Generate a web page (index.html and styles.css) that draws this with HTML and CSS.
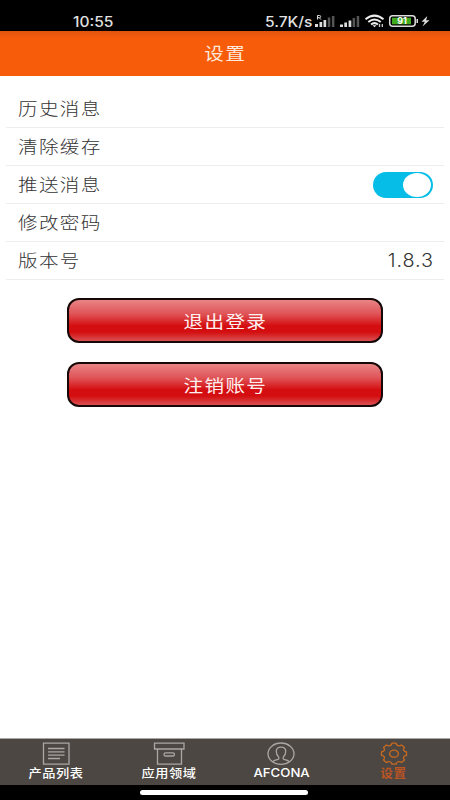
FILE: index.html
```html
<!DOCTYPE html>
<html lang="zh-CN">
<head>
<meta charset="utf-8">
<title>设置</title>
<link rel="stylesheet" href="styles.css">
</head>
<body>
<div class="phone">
  <div class="status">
    <span class="clock">10:55</span>
    <span class="speed">5.7K/s</span>
    <svg class="indicators" width="118" height="20" viewBox="0 0 118 20">
      <g fill="#ddd">
        <path d="M1 14h3v3h-3zM5.500 12h2.700v5h-2.700zM9.500 10h2.700v7h-2.700z"/>
        <path d="M26 14.500h3v2.500h-3zM30.300 12.500h2.700v4.500h-2.700zM34.600 10.500h2.700v6.500h-2.700z"/>
      </g>
      <g fill="#555"><path d="M13.800 7.500h2.500v9.500h-2.500zM17.900 6h2.500v11h-2.500zM38.600 8h2.500v9h-2.500zM42.700 6h2.500v11h-2.500z"/></g>
      <path d="M3.500 9.500V5.500h2q1.200 0 1.200 1.100t-1.200 1.100h-2M5.300 7.700L6.900 9.500" fill="none" stroke="#ddd" stroke-width="1"/>
      <g fill="none" stroke="#eee" stroke-width="2">
        <path d="M51.500 9.200Q60.500 2 69.500 9.200M54.300 12Q60.500 7 66.700 12M57 14.500Q60.500 11.800 64 14.500"/>
      </g>
      <path d="M58.500 15.200h4L60.500 17.300z" fill="#eee"/>
      <path d="M65.500 17v-3M68.300 14V17" stroke="#ccc" stroke-width="1.300"/>
      <rect x="75.700" y="5.700" width="25.500" height="10.600" rx="3" fill="#000" stroke="#ddd" stroke-width="1.500"/>
      <rect x="78" y="7.700" width="19" height="6.600" fill="#43a91e"/>
      <path d="M102.500 9h1.500v4h-1.500z" fill="#ddd"/>
      <text x="88" y="14" text-anchor="middle" class="charge">91</text>
      <path d="M113.300 6L107.500 11.800h3.300L108.500 16.500l7-6.200h-3.400z" fill="#ddd"/>
    </svg>
  </div>
  <header class="title"><span class="stretch">设置</span></header>
  <main class="content">
    <ul class="list">
      <li class="row"><span class="label">历史消息</span></li>
      <li class="row"><span class="label">清除缓存</span></li>
      <li class="row"><span class="label">推送消息</span><span class="switch"><span class="knob"></span></span></li>
      <li class="row"><span class="label">修改密码</span></li>
      <li class="row"><span class="label">版本号</span><span class="version">1.8.3</span></li>
    </ul>
    <div class="actions">
      <button class="action"><span class="stretch">退出登录</span></button>
      <button class="action"><span class="stretch">注销账号</span></button>
    </div>
  </main>
  <nav class="tabs">
    <div class="tab">
      <svg width="28" height="24" viewBox="0 0 28 24" fill="none" stroke="#aaa7a4" stroke-width="1.300"><path d="M1.500 1.200h25.500v21h-25.500z"/><path d="M6 6.500h16.500M6 9.800h16.500M6 13.100h16.500M6 16.500h12"/></svg>
      <span class="tab-text">产品列表</span>
    </div>
    <div class="tab">
      <svg width="32" height="24" viewBox="0 0 32 24" fill="none" stroke="#aaa7a4" stroke-width="1.300"><path d="M1.500 1.200h29.500v5.800h-29.500zM4.500 7v15.200h24V7"/><rect x="11" y="10.800" width="10.500" height="3.200" rx="1.600"/></svg>
      <span class="tab-text">应用领域</span>
    </div>
    <div class="tab">
      <svg width="28" height="24" viewBox="0 0 28 24" fill="none" stroke="#aaa7a4" stroke-width="1.300"><ellipse cx="14" cy="11.700" rx="13" ry="10.700"/><path d="M5.500 19.900Q7 18.200 11 17.400Q12.500 16.900 11.500 14.700Q9.300 12.700 9.300 9.200Q9.300 5.200 14 5.200T18.700 9.200Q18.700 12.700 16.500 14.700Q15.500 16.900 17 17.400Q21 18.200 22.500 19.900"/></svg>
      <span class="tab-text latin">AFCONA</span>
    </div>
    <div class="tab active">
      <svg width="28" height="24" viewBox="-14 -11.700 28 24" fill="none" stroke="#c86a20" stroke-width="1.300" stroke-linejoin="round"><path d="M-2 -10.500H2Q3.200 -6.500 7.600 -8.700L10.500 -6.300Q7.800 -2.700 12.500 -1.700V1.700Q7.800 2.700 10.500 6.300L7.600 8.700Q3.200 6.500 2 10.500H-2Q-3.200 6.500 -7.600 8.700L-10.500 6.300Q-7.800 2.700 -12.500 1.700V-1.700Q-7.800 -2.700 -10.500 -6.300L-7.600 -8.700Q-3.200 -6.500 -2 -10.500z"/><ellipse rx="4.400" ry="3.500"/></svg>
      <span class="tab-text">设置</span>
    </div>
  </nav>
  <div class="home"><span class="home-bar"></span></div>
</div>
</body>
</html>
```

FILE: styles.css
```css
* { box-sizing: border-box; }

body {
  margin: 0;
  font-family: "Noto Sans CJK SC", sans-serif;
  background: #fff;
}

.phone {
  width: 450px;
  height: 800px;
  display: flex;
  flex-direction: column;
  overflow: hidden;
}

.status {
  flex: none;
  height: 31px;
  background: #000;
  color: #e2e2e2;
  display: flex;
  align-items: flex-start;
  padding: 10px 16px 0 73px;
  font: 500 14px/24px "Inter", sans-serif;
  white-space: nowrap;
}

.clock,
.speed {
  display: block;
  transform-origin: left center;
}

.clock { width: 192px; transform: scaleX(1.11); }
.speed { width: 49px; transform: scaleX(1.11); }
.indicators { flex: none; }

.charge {
  font: 700 9px "Inter", sans-serif;
  fill: #fff;
}

.title {
  flex: none;
  height: 45px;
  background: linear-gradient(#e0540f, #f75c0a 7px);
  color: #ffe9dc;
  display: flex;
  align-items: center;
  justify-content: center;
  padding-bottom: 2px;
  font-size: 17px;
  line-height: 24px;
}

.stretch {
  display: block;
  transform: scaleX(1.15);
  letter-spacing: 1.2px;
  margin-right: -1.2px;
}

.content { flex: 1; padding: 14px 6px 0 6px; }

.list { list-style: none; margin: 0; padding: 0; }

.row {
  height: 38px;
  border-bottom: 1px solid #ededed;
  display: flex;
  align-items: center;
  justify-content: space-between;
  padding: 0 11px 0 12px;
  color: #333;
}

.label {
  font-size: 17px;
  font-weight: 300;
  line-height: 24px;
  padding-bottom: 2px;
  letter-spacing: 1.2px;
  transform: scaleX(1.15);
  transform-origin: left center;
}

.switch {
  width: 60px;
  height: 26px;
  border-radius: 13px;
  background: #05bde7;
  padding: 1px 2px;
  display: flex;
  justify-content: flex-end;
}

.knob {
  width: 28px;
  height: 24px;
  border-radius: 50%;
  background: #fff;
}

.version {
  font: 300 18px/24px "Inter", sans-serif;
  letter-spacing: .8px;
  margin-right: -.8px;
  padding-top: 1px;
  transform: scaleX(1.1);
  transform-origin: right center;
}

.actions {
  display: flex;
  flex-direction: column;
  gap: 19px;
  padding: 18px 61px 0;
}

.action {
  height: 45px;
  border: 2px solid #170808;
  border-radius: 12px;
  background: linear-gradient(#e98587 0%, #df5356 34%, #d40e10 63%, #d40e10 78%, #da5052 100%);
  color: #fff0f0;
  font: 400 17px/24px "Noto Sans CJK SC", sans-serif;
  display: flex;
  align-items: center;
  justify-content: center;
  padding: 0;
}

.tabs {
  flex: none;
  height: 47px;
  background: #4c4743;
  border-top: 1px solid #aaa8a6;
  display: grid;
  grid-template-columns: repeat(4, 1fr);
}

.tab {
  display: flex;
  flex-direction: column;
  align-items: center;
  padding-top: 3px;
  color: #fff;
}

.tab svg { flex: none; display: block; }

.tab-text {
  font-size: 12px;
  font-weight: 500;
  line-height: 14px;
  letter-spacing: .5px;
  margin-right: -.5px;
  transform: scaleX(1.1);
}

.latin { font-family: "Inter", sans-serif; letter-spacing: 0; margin: 0; }
.active { color: #bd5523; }
.active .tab-text { font-weight: 700; transform: scaleX(1.05); }

.home {
  flex: none;
  height: 15px;
  background: #000;
  display: flex;
  justify-content: center;
  padding: 5px 3px 0 0;
}

.home-bar {
  width: 168px;
  height: 5px;
  border-radius: 3px;
  background: #fff;
}
```
